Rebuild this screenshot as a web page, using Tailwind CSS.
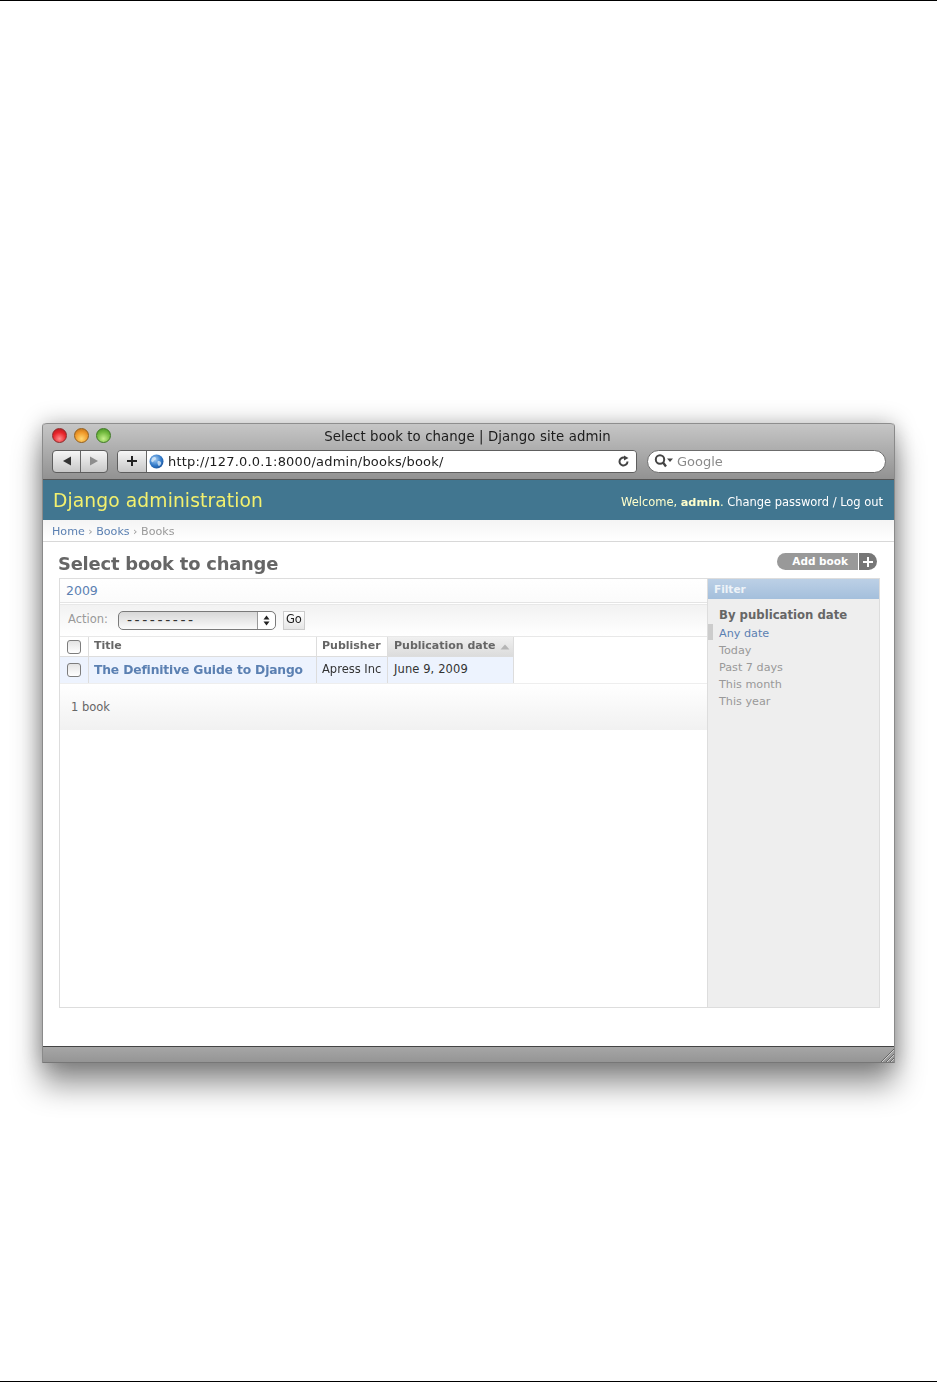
<!DOCTYPE html>
<html><head><meta charset="utf-8"><title>Select book to change</title>
<script src="https://cdn.jsdelivr.net/npm/@tailwindcss/browser@4"></script></head>
<body class="bg-white">
<div class="w-[937px] h-[1382px] flex flex-col border-y border-black bg-white font-['DejaVu_Sans',sans-serif] overflow-hidden">
 <div class="ml-[42px] mt-[422px] w-[853px] h-[640px] flex flex-col rounded-t-[4px] border-x border-[#8a8a8a] shadow-[0_22px_30px_rgba(0,0,0,0.42),0_0_22px_rgba(0,0,0,0.28)] bg-white relative blur-[0.5px]">
  <!-- title bar -->
  <div class="h-[57px] shrink-0 rounded-t-[4px] border-t border-[#8e8e8e] border-b border-b-[#555] bg-gradient-to-b from-[#c6c6c6] to-[#929292] flex flex-col">
   <div class="h-[24px] flex items-center relative shrink-0">
    <div class="flex gap-[7px] ml-[9px] mb-[2px]">
     <span class="w-[15px] h-[15px] rounded-full border border-[#8c2b2b] bg-[radial-gradient(circle_at_50%_75%,#ff8c8c,#e8242a_55%,#a81c20)]"></span>
     <span class="w-[15px] h-[15px] rounded-full border border-[#94601c] bg-[radial-gradient(circle_at_50%_75%,#ffd870,#f0992a_55%,#b86a16)]"></span>
     <span class="w-[15px] h-[15px] rounded-full border border-[#3f7a24] bg-[radial-gradient(circle_at_50%_75%,#c6ef8c,#74bb40_55%,#3f8a20)]"></span>
    </div>
    <span class="absolute left-0 right-0 pt-[1px] pr-[2px] text-center text-[13.3px] text-[#1c1c1c] tracking-[0.1px]">Select book to change | Django site admin</span>
   </div>
   <div class="flex items-center h-[24px] ml-[9px] mt-[1px] shrink-0">
    <div class="flex w-[56px] h-[23px] rounded-[4px] border border-[#5e5e5e] bg-gradient-to-b from-[#f6f6f6] to-[#c8c8c8]">
     <div class="w-[28px] flex items-center justify-center border-r border-[#666]"><svg width="10" height="10" viewBox="0 0 10 10"><path d="M9 0.5V9.5L1 5Z" fill="#333"/></svg></div>
     <div class="flex-1 flex items-center justify-center"><svg width="10" height="10" viewBox="0 0 10 10"><path d="M1 0.5V9.5L9 5Z" fill="#8d8d8d"/></svg></div>
    </div>
    <div class="ml-[9px] flex w-[520px] h-[23px] rounded-[4px] border border-[#5e5e5e] overflow-hidden">
     <div class="w-[29px] shrink-0 flex items-center justify-center bg-gradient-to-b from-[#f6f6f6] to-[#c8c8c8] border-r border-[#666]"><svg width="12" height="12" viewBox="0 0 12 12"><path d="M6 1V11M1 6H11" stroke="#222" stroke-width="2"/></svg></div>
     <div class="flex-1 bg-white flex items-center pl-[2px] pr-[6px]">
      <svg width="15" height="15" viewBox="0 0 15 15" class="shrink-0"><defs><radialGradient id="g" cx="0.4" cy="0.35" r="0.75"><stop offset="0" stop-color="#a8d0f5"/><stop offset="0.6" stop-color="#2f78c8"/><stop offset="1" stop-color="#184c90"/></radialGradient></defs><circle cx="7.5" cy="7.5" r="7" fill="url(#g)"/><path d="M3 4C5 2.5 7 3 7 4.5S5 6 4.500 7.500 3 8 2 7ZM9 7C11 6.500 13 8 12 10S9.500 12.500 9 11 8 8 9 7Z" fill="#dfeefa" opacity="0.75"/></svg>
      <span class="ml-[4px] pt-[1px] text-[13px] text-[#1d1d1d] tracking-[0.2px] whitespace-nowrap">http://127.0.0.1:8000/admin/books/book/</span>
      <svg width="13" height="13" viewBox="0 0 13 13" class="ml-auto"><path d="M10.500 6.500A4 4 0 1 1 8.500 3" fill="none" stroke="#444" stroke-width="2"/><path d="M7 0.500L11.500 3 7 5.500Z" fill="#444"/></svg>
     </div>
    </div>
    <div class="ml-[10px] w-[239px] h-[23px] rounded-full border border-[#6c6c6c] bg-white flex items-center pl-[6px]">
     <svg width="19" height="14" viewBox="0 0 19 14"><circle cx="6" cy="5.500" r="4.200" fill="none" stroke="#444" stroke-width="2"/><path d="M9 8.500L12 12.500" stroke="#444" stroke-width="2.400"/><path d="M13 4.500H19L16 8Z" fill="#444"/></svg>
     <span class="ml-[4px] pt-[1px] text-[13px] text-[#8a8a8a]">Google</span>
    </div>
   </div>
  </div>
  <!-- page -->
  <div class="flex-1 flex flex-col min-h-0">
   <div class="h-[40px] shrink-0 bg-[#417690] flex items-center justify-between pl-[10px] pr-[11px]">
    <span class="text-[18.7px] text-[#f3f06e] tracking-[0.1px] pt-[2px]">Django administration</span>
    <span class="text-[11.5px] text-[#ffffcc] mt-[5px] tracking-[-0.03px]">Welcome, <b class="text-[11.300px]">admin</b>. <span class="text-white">Change password / Log out</span></span>
   </div>
   <div class="h-[22px] shrink-0 pl-[9px] pt-[3px] flex items-center text-[11.100px] text-[#999] bg-gradient-to-b from-[#f4f4f4] to-white border-b border-[#d8d8d8]">
    <span class="text-[#5b80b2]">Home</span><span class="mx-[3.500px]">›</span><span class="text-[#5b80b2]">Books</span><span class="mx-[3.500px]">›</span><span>Books</span>
   </div>
   <div class="flex-1 flex flex-col min-h-0 pl-[16px] pr-[14px] pb-[38px]">
    <div class="h-[36px] shrink-0 flex items-center justify-between">
     <h1 class="text-[17.900px] font-bold text-[#666] -ml-[1px] mt-[9px] tracking-[-0.2px]">Select book to change</h1>
     <div class="flex h-[17px] mr-[3px] mt-[3px] rounded-full overflow-hidden text-[10.500px] font-bold text-white">
      <span class="w-[82px] bg-[#999] flex items-center justify-end pr-[10px] border-r border-white">Add book</span>
      <span class="w-[18px] bg-[#777] flex items-center justify-center"><svg width="12" height="12" viewBox="0 0 12 12"><path d="M6 1V11M1 6H11" stroke="#fff" stroke-width="2"/></svg></span>
     </div>
    </div>
    <div class="flex-1 flex min-h-0 border border-[#ddd]">
     <div class="flex-1 min-w-0 flex flex-col relative">
      <div class="h-[24px] shrink-0 flex items-center pl-[6px] pt-[1px] text-[12.500px] text-[#5b80b2] bg-gradient-to-b from-white to-[#fbfbfb] border-b border-[#e4e4e4]">2009</div>
      <div class="h-[33px] shrink-0 mt-[1px] pb-[1px] flex items-center pl-[8px] text-[11.500px] text-[#999] bg-gradient-to-b from-[#f2f2f2] to-white border-y border-[#e8e8e8]">
       <span>Action:</span>
       <div class="ml-[10px] w-[158px] h-[19px] rounded-[5px] border border-[#7a7a7a] flex bg-gradient-to-b from-[#d8d8d8] to-[#fafafa]">
        <span class="flex-1 pl-[8px] text-[#333] text-[14px] leading-[17px] tracking-[2.600px] whitespace-nowrap overflow-hidden">---------</span>
        <span class="w-[18px] shrink-0 border-l border-[#999] flex items-center justify-center bg-white rounded-r-[5px]"><svg width="7" height="11" viewBox="0 0 7 11"><path d="M3.500 0.500L6.500 4.500H0.500ZM3.500 10.500L0.500 6.500H6.500Z" fill="#222"/></svg></span>
       </div>
       <span class="ml-[7px] w-[22px] h-[19px] flex items-center justify-center border border-[#ccc] bg-gradient-to-b from-white to-[#e6e6e6] text-[#222] text-[11.500px]">Go</span>
      </div>
      <div class="flex h-[47px] shrink-0 text-[11.500px] border-b border-[#eee]">
       <div class="w-[29px] flex flex-col border-r border-[#ddd]">
        <div class="h-[20px] flex items-center justify-center border-b border-[#ddd]"><span class="block w-[14px] h-[14px] rounded-[3px] border border-[#7d7d7d] bg-gradient-to-b from-[#e4e4e4] to-white"></span></div>
        <div class="flex-1 flex items-center justify-center bg-[#edf3fe]"><span class="block w-[14px] h-[14px] rounded-[3px] border border-[#7d7d7d] bg-gradient-to-b from-[#e4e4e4] to-white"></span></div>
       </div>
       <div class="w-[228px] flex flex-col border-r border-[#ddd]">
        <div class="h-[20px] flex items-center pl-[5px] border-b border-[#ddd] font-bold text-[11px] text-[#666]">Title</div>
        <div class="flex-1 flex items-center pl-[5px] bg-[#edf3fe] font-bold text-[12.300px] text-[#5b80b2] whitespace-nowrap tracking-[-0.15px]">The Definitive Guide to Django</div>
       </div>
       <div class="w-[71px] flex flex-col border-r border-[#ddd]">
        <div class="h-[20px] flex items-center pl-[5px] border-b border-[#ddd] font-bold text-[11px] text-[#666] whitespace-nowrap">Publisher</div>
        <div class="flex-1 flex items-center pl-[5px] bg-[#edf3fe] text-[#333] whitespace-nowrap">Apress Inc</div>
       </div>
       <div class="w-[126px] flex flex-col border-r border-[#ddd]">
        <div class="h-[20px] flex items-center pl-[6px] border-b border-[#ddd] font-bold text-[11px] text-[#666] whitespace-nowrap bg-gradient-to-b from-[#f0f0f0] to-[#dcdcdc]">Publication date<svg width="10" height="6" viewBox="0 0 10 6" class="ml-[4px]"><path d="M5 0.500L9.500 5.500H0.500Z" fill="#b5b5b5"/></svg></div>
        <div class="flex-1 flex items-center pl-[6px] bg-[#edf3fe] text-[#333] whitespace-nowrap tracking-[0.1px]">June 9, 2009</div>
       </div>
      </div>
      <div class="h-[46px] shrink-0 flex items-center pl-[11px] pt-[1px] text-[11.500px] text-[#666] bg-gradient-to-b from-white to-[#f1f1f1]">1 book</div>
     </div>
     <div class="w-[172px] shrink-0 border-l border-[#ddd] bg-[#eee] relative">
      <div class="h-[20px] flex items-center pl-[6px] pt-[1px] text-[10.500px] font-bold text-[#eef3f8] bg-gradient-to-b from-[#bcd0e6] to-[#a4bfdc]">Filter</div>
      <div class="pl-[11px] pt-[8px] text-[11.200px] text-[#999] leading-[17px]">
       <div class="text-[11.700px] font-bold text-[#666] mb-[1px]">By publication date</div>
       <div class="text-[#5b80b2]">Any date</div><div>Today</div><div>Past 7 days</div><div>This month</div><div>This year</div>
      </div>
      <span class="absolute left-0 top-[45px] w-[5px] h-[16px] bg-[#ccc]"></span>
     </div>
    </div>
   </div>
  </div>
  <div class="h-[17px] shrink-0 border-t border-t-[#444] border-b border-b-[#777] bg-gradient-to-b from-[#a6a6a6] to-[#959595] flex justify-end">
   <svg width="14" height="14" viewBox="0 0 14 14" class="mt-[1px]"><path d="M1 14L14 1M6 14L14 6M10 14L14 10" stroke="#666" stroke-width="1"/><path d="M2 14L14 2M7 14L14 7M11 14L14 11" stroke="#ccc" stroke-width="1"/></svg>
  </div>
 </div>
</div>
</body></html>
